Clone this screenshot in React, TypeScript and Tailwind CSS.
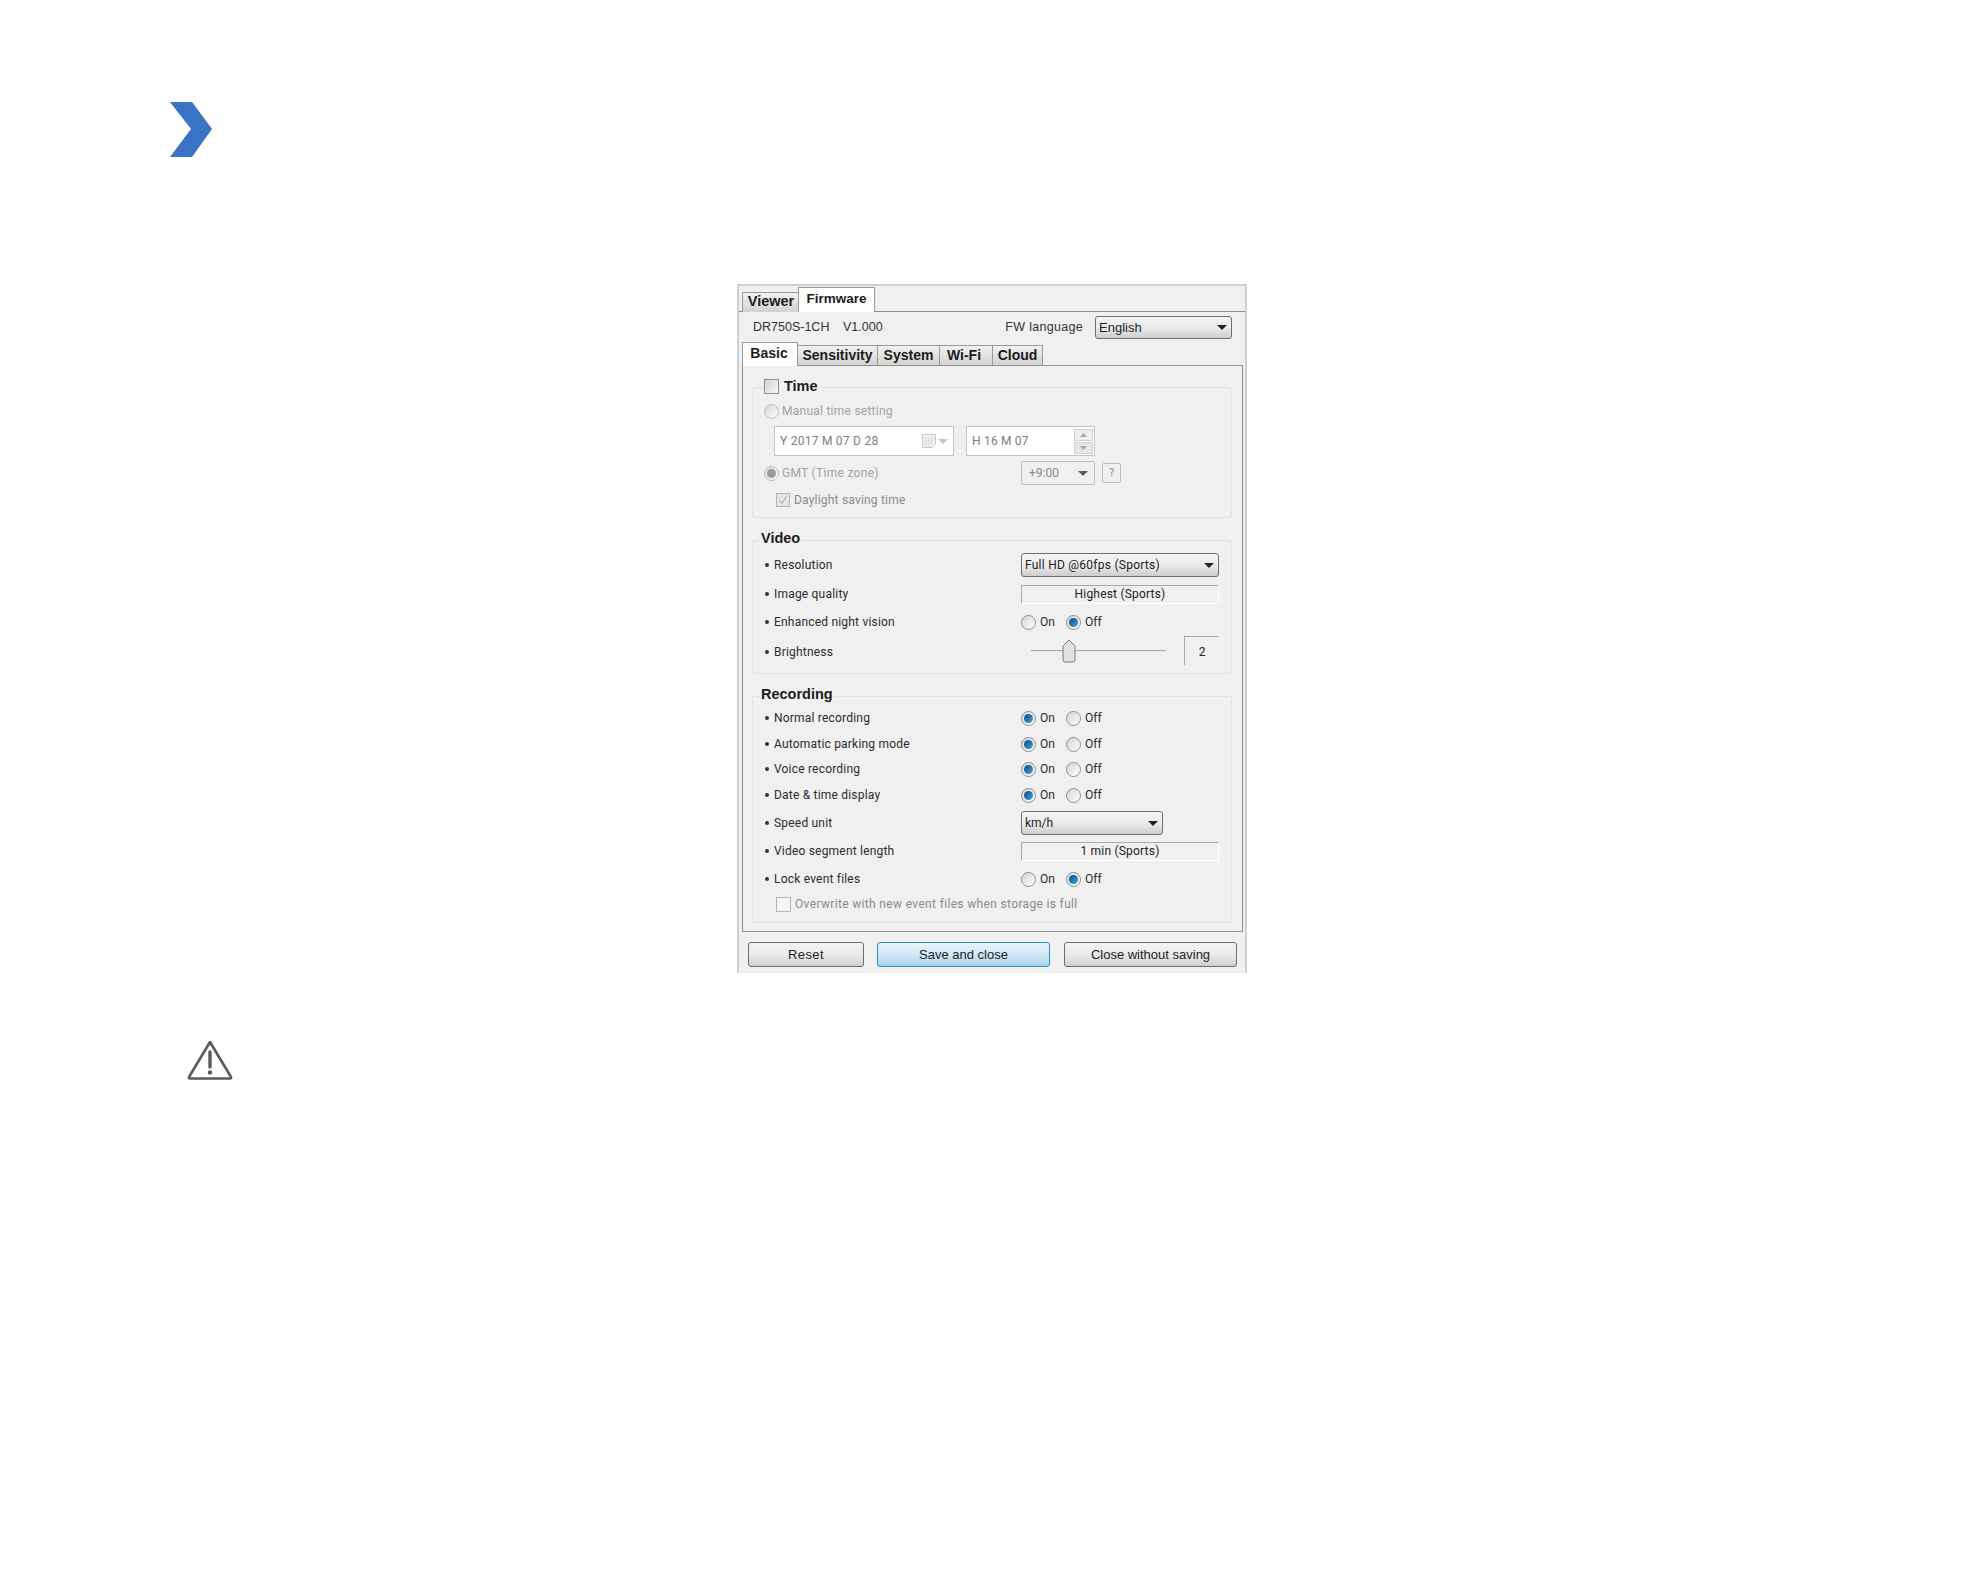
import type { ReactNode } from "react";

function Radio({ checked, dim }: { checked?: boolean; dim?: boolean }) {
  return (
    <span className={`flex h-[15px] w-[15px] shrink-0 items-center justify-center rounded-full border bg-gradient-to-br from-[#d4d4d4] to-white ${dim ? "border-[#bdbdbd]" : "border-[#8e8f8f]"}`}>
      {checked && (
        <span className={`h-[9px] w-[9px] rounded-full ${dim ? "bg-[#9a9a9a]" : "bg-gradient-to-br from-[#0b4f7d] to-[#3ea6dc]"}`} />
      )}
    </span>
  );
}

function OnOff({ on }: { on: boolean }) {
  return (
    <div className="flex items-center text-[12px] text-[#2b2b2b]">
      <Radio checked={on} />
      <span className="ml-[4px] w-[26px]">On</span>
      <Radio checked={!on} />
      <span className="ml-[4px]">Off</span>
    </div>
  );
}

function Caret({ color = "#222" }: { color?: string }) {
  return (
    <svg width="10" height="5" viewBox="0 0 10 5" className="shrink-0">
      <path d="M0 0H10L5 5Z" fill={color} />
    </svg>
  );
}

function Select({ label, className }: { label: string; className: string }) {
  return (
    <div className={`flex items-center justify-between rounded-[3px] border border-[#6f6f6f] bg-gradient-to-b from-[#f4f4f4] via-[#ececec] to-[#cdcdcd] pl-[3px] pr-[4px] text-[#222] ${className}`}>
      <span>{label}</span>
      <Caret />
    </div>
  );
}

function ReadOnly({ children }: { children: ReactNode }) {
  return (
    <div className="flex h-[19px] w-[198px] items-center justify-center border border-t-[#a9a9a9] border-l-[#a9a9a9] border-b-white border-r-white text-[12px] tracking-[0.2px] text-[#222]">
      {children}
    </div>
  );
}

function Row({ label, height, children }: { label: string; height: string; children?: ReactNode }) {
  return (
    <div className={`grid grid-cols-[268px_198px] items-center ${height}`}>
      <div className="flex items-center pl-[12px] text-[12px] tracking-[0.2px] text-[#2b2b2b]">
        <span className="mr-[5px] h-[4px] w-[4px] rounded-full bg-[#333]" />
        {label}
      </div>
      {children}
    </div>
  );
}

function Legend({ children }: { children: ReactNode }) {
  return (
    <div className="absolute -top-[10px] left-[7px] bg-[#f0f0f0] pl-px pr-[1px] font-['Liberation_Sans',sans-serif] text-[14.5px] font-bold leading-none text-[#1c1c1c]">
      {children}
    </div>
  );
}

function Group({ className, children }: { className: string; children: ReactNode }) {
  return (
    <div className={`relative mx-[9px] w-[480px] rounded-[3px] border border-[#e2e2e2] ${className}`}>{children}</div>
  );
}

function Button({ label, primary, className }: { label: string; primary?: boolean; className: string }) {
  return (
    <div className={`flex h-[25px] items-center justify-center rounded-[3px] border text-[13px] text-[#222] ${primary ? "border-[#2f8fc4] bg-gradient-to-b from-[#e9f5fc] via-[#d3e9f6] to-[#a9d3ec]" : "border-[#6f6f6f] bg-gradient-to-b from-[#f4f4f4] via-[#ebebeb] to-[#cfcfcf]"} ${className}`}>
      {label}
    </div>
  );
}

function SubTab({ label, width }: { label: string; width: string }) {
  return (
    <div className={`flex h-[20px] items-center justify-center border-r border-t border-[#9a9a9a] bg-gradient-to-b from-[#f2f2f2] to-[#d2d2d2] text-[14px] font-bold text-[#1c1c1c] ${width}`}>
      {label}
    </div>
  );
}

export default function App() {
  return (
    <div className="flex h-[1587px] w-full flex-col overflow-hidden bg-white pt-[102px] font-['Roboto','Liberation_Sans',sans-serif]">
      <svg width="43" height="55" viewBox="0 0 43 55" className="ml-[170px] shrink-0">
        <path d="M0 0H22L42 27L22 55H0L21 27Z" fill="#3a72c4" />
      </svg>

      <div className="ml-[737px] mt-[127px] flex h-[689px] w-[510px] shrink-0 flex-col border-2 border-b-0 border-[#cfcfcf] bg-[#f0f0f0] font-['Liberation_Sans',sans-serif]">
        {/* top tabs */}
        <div className="mt-[2px] flex h-[24px] items-end border-b border-[#8f8f8f] pl-[3px]">
          <div className="-mb-px flex h-[20px] w-[56px] items-center justify-center border-l border-t border-[#9a9a9a] bg-gradient-to-b from-[#f2f2f2] to-[#d2d2d2] pb-px pl-px text-[14.5px] font-bold text-[#1c1c1c]">
            Viewer
          </div>
          <div className="-mb-px flex h-[25px] w-[77px] items-center justify-center border-x border-t border-[#9a9a9a] bg-white pb-px text-[13.5px] font-bold text-[#1c1c1c]">
            Firmware
          </div>
        </div>

        {/* model + language */}
        <div className="flex h-[31px] items-center pl-[14px] pr-[13px] text-[12.5px] text-[#333]">
          <span className="w-[90px]">DR750S-1CH</span>
          <span>V1.000</span>
          <span className="ml-auto mr-[12px] tracking-[0.3px]">FW language</span>
          <Select label="English" className="h-[23px] w-[137px] text-[13px]" />
        </div>

        {/* sub tabs */}
        <div className="flex h-[22px] items-end pl-[3px]">
          <div className="z-10 -mb-px flex h-[24px] w-[56px] items-center justify-center border-l border-t border-r border-[#9a9a9a] bg-white pb-[3px] pr-[2px] text-[14px] font-bold text-[#1c1c1c]">
            Basic
          </div>
          <SubTab label="Sensitivity" width="w-[80px]" />
          <SubTab label="System" width="w-[62px]" />
          <SubTab label="Wi-Fi" width="w-[53px] pr-[4px]" />
          <SubTab label="Cloud" width="w-[50px]" />
        </div>

        {/* pane */}
        <div className="ml-[3px] flex h-[567px] w-[501px] flex-col border border-[#8f8f8f] bg-[#f0f0f0] pt-[21px] font-['Roboto','Liberation_Sans',sans-serif]">
          <Group className="h-[131px]">
            <div className="absolute -top-[9px] left-[11px] flex items-center bg-[#f0f0f0] pr-[3px]">
              <span className="h-[15px] w-[15px] border border-[#8e8f8f] bg-gradient-to-br from-[#d4d4d4] to-[#f5f5f5]" />
              <span className="ml-[5px] font-['Liberation_Sans',sans-serif] text-[14.5px] font-bold leading-none text-[#1c1c1c]">Time</span>
            </div>
            <div className="mt-[12px] flex h-[22px] items-center pl-[11px] text-[12px] text-[#a3a3a3]">
              <Radio dim />
              <span className="ml-[3px] tracking-[0.25px]">Manual time setting</span>
            </div>
            <div className="mt-[4px] flex pl-[21px]">
              <div className="flex h-[30px] w-[180px] items-center border border-[#c4c4c4] bg-white pl-[5px] pr-[5px] text-[12px] tracking-[0.25px] text-[#7d7d7d]">
                <span>Y 2017 M 07 D 28</span>
                <svg width="16" height="16" viewBox="0 0 16 16" className="ml-auto">
                  <path d="M1.5 1.5H14.5V11L11 14.5H1.5Z" fill="#f2f2f2" stroke="#c8c8c8" />
                  <path d="M1.5 5H14.5M1.5 8H14.5M1.5 11H11M5 5V14M8 5V14M11 5V11" stroke="#dcdcdc" />
                </svg>
                <span className="ml-[1px]"><Caret color="#c4c4c4" /></span>
              </div>
              <div className="ml-[12px] flex h-[30px] w-[129px] items-center justify-between border border-[#c4c4c4] bg-white pl-[5px] pr-px text-[12px] tracking-[0.2px] text-[#7d7d7d]">
                <span>H 16 M 07</span>
                <div className="flex flex-col gap-px">
                  <div className="flex h-[12px] w-[19px] items-center justify-center border border-[#d0d0d0] bg-[#efefef]">
                    <svg width="7" height="4" viewBox="0 0 7 4"><path d="M0 4L3.5 0L7 4Z" fill="#a8a8a8" /></svg>
                  </div>
                  <div className="flex h-[12px] w-[19px] items-center justify-center border border-[#d0d0d0] bg-[#e6e6e6]">
                    <svg width="7" height="4" viewBox="0 0 7 4"><path d="M0 0H7L3.5 4Z" fill="#a8a8a8" /></svg>
                  </div>
                </div>
              </div>
            </div>
            <div className="mt-[5px] flex h-[24px] items-center pl-[11px] text-[12px] text-[#a3a3a3]">
              <Radio checked dim />
              <span className="ml-[3px] w-[239px] tracking-[0.3px]">GMT (Time zone)</span>
              <div className="flex h-[24px] w-[74px] items-center justify-between rounded-[2px] border border-[#bdbdbd] pl-[7px] pr-[6px] text-[#8a8a8a]">
                <span>+9:00</span>
                <Caret color="#5a5a5a" />
              </div>
              <div className="ml-[7px] flex h-[20px] w-[19px] items-center justify-center rounded-[2px] border border-[#bdbdbd] text-[11px] text-[#8a8a8a]">?</div>
            </div>
            <div className="mt-[5px] flex h-[20px] items-center pl-[23px] text-[12px] tracking-[0.2px] text-[#8a8a8a]">
              <span className="flex h-[14px] w-[14px] items-center justify-center border border-[#b5b5b5] bg-[#e6e6e6]">
                <svg width="10" height="10" viewBox="0 0 10 10"><path d="M1.5 5.5L4 8.5L8.5 1" fill="none" stroke="#b5b5b5" strokeWidth="1.2" /></svg>
              </span>
              <span className="ml-[4px]">Daylight saving time</span>
            </div>
          </Group>

          <Group className="mt-[22px] h-[134px] pt-[12px]">
            <Legend>Video</Legend>
            <Row label="Resolution" height="h-[24px]">
              <Select label="Full HD @60fps (Sports)" className="h-[24px] w-[198px] text-[12px] tracking-[0.25px]" />
            </Row>
            <Row label="Image quality" height="h-[34px]">
              <ReadOnly>Highest (Sports)</ReadOnly>
            </Row>
            <Row label="Enhanced night vision" height="h-[22px]">
              <OnOff on={false} />
            </Row>
            <Row label="Brightness" height="h-[38px]">
              <div className="-mt-[3px] flex items-center">
                <div className="relative ml-[10px] h-[2px] w-[135px] border-y border-t-[#a9a9a9] border-b-[#e6e6e6]">
                  <svg width="14" height="24" viewBox="0 0 14 24" className="absolute -top-[12px] left-[31px]">
                    <path d="M1 7L7 1L13 7V21Q13 23 11 23H3Q1 23 1 21Z" fill="#e2e2e2" stroke="#7c7c7c" />
                  </svg>
                </div>
                <div className="ml-[18px] flex h-[29px] w-[35px] items-center justify-center border-l border-t border-[#a9a9a9] pt-px text-[12px] text-[#222]">2</div>
              </div>
            </Row>
          </Group>

          <Group className="mt-[22px] h-[227px] pt-[10px]">
            <Legend>Recording</Legend>
            <Row label="Normal recording" height="h-[22px]"><OnOff on /></Row>
            <Row label="Automatic parking mode" height="h-[30px]"><OnOff on /></Row>
            <Row label="Voice recording" height="h-[20px]"><OnOff on /></Row>
            <Row label="Date & time display" height="h-[32px]"><OnOff on /></Row>
            <Row label="Speed unit" height="h-[22px]">
              <Select label="km/h" className="h-[24px] w-[142px] text-[12px]" />
            </Row>
            <Row label="Video segment length" height="h-[36px]">
              <ReadOnly>1 min (Sports)</ReadOnly>
            </Row>
            <Row label="Lock event files" height="h-[20px]"><OnOff on={false} /></Row>
            <div className="flex h-[30px] items-center pl-[23px] text-[12px] tracking-[0.34px] text-[#8a8a8a]">
              <span className="h-[15px] w-[15px] border border-[#b5b5b5] bg-[#f5f5f5]" />
              <span className="ml-[4px]">Overwrite with new event files when storage is full</span>
            </div>
          </Group>
        </div>

        {/* footer buttons */}
        <div className="mt-[10px] flex pl-[9px]">
          <Button label="Reset" className="w-[116px] tracking-[0.4px]" />
          <Button label="Save and close" primary className="ml-[13px] w-[173px]" />
          <Button label="Close without saving" className="ml-[14px] w-[173px]" />
        </div>
      </div>

      <svg width="46" height="40" viewBox="0 0 46 40" className="ml-[187px] mt-[67px] shrink-0">
        <path d="M23 2L44 37Q44.5 38.5 43 38.5H3Q1.5 38.5 2 37Z" fill="none" stroke="#5a5a5a" strokeWidth="2.6" strokeLinejoin="round" />
        <path d="M23 12V27" stroke="#5a5a5a" strokeWidth="3.4" strokeLinecap="round" />
        <circle cx="23" cy="32.5" r="2.2" fill="#5a5a5a" />
      </svg>
    </div>
  );
}
